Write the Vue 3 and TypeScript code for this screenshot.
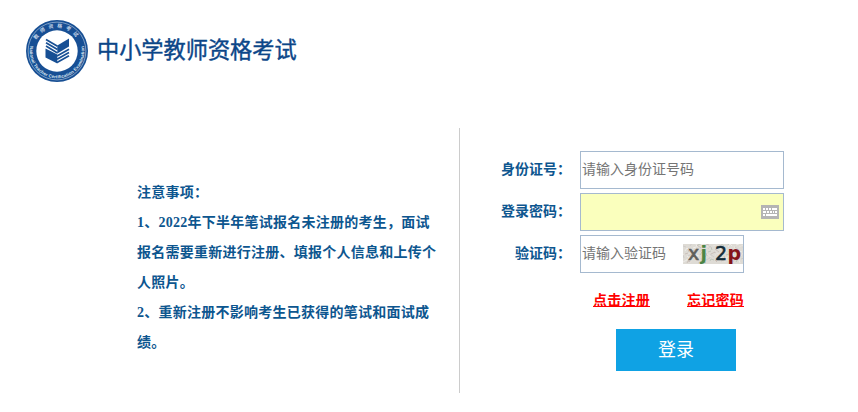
<template>
    <div class="page">
        <header class="header">
            <svg class="logo" viewBox="0 0 64 64">
                <defs>
                    <path id="arc-top" d="M8.6 32 A23.4 23.4 0 0 1 55.4 32" />
                    <path id="arc-bottom" d="M5 28 A27.3 27.3 0 1 0 59 28" />
                </defs>
                <circle cx="32" cy="32" r="31" fill="#174f94" />
                <circle cx="32" cy="32" r="28.9" fill="none" stroke="#a9c0da" stroke-width="0.7" />
                <circle cx="32" cy="32" r="20.7" fill="#fff" />
                <text class="logo-cn">
                    <textPath href="#arc-top" startOffset="50%" text-anchor="middle">教师资格考试</textPath>
                </text>
                <text class="logo-en">
                    <textPath href="#arc-bottom" startOffset="50%" text-anchor="middle">National Teacher Certification Examination</textPath>
                </text>
                <g fill="#174f94">
                    <path d="M32.3 26.5 L44 19.5 V27.5 L32.3 34.5 Z" />
                    <path d="M20.5 29.5 L32.3 35.5 V44.5 L20.5 38.5 Z" />
                </g>
                <g stroke="#174f94" stroke-width="1.7" fill="none">
                    <path d="M21 20.5 L32.5 27.3" />
                    <path d="M21 23.8 L32.5 30.6" />
                    <path d="M21 27.1 L32.5 33.9" />
                    <path d="M32 36.9 L44 30.2" />
                    <path d="M32 40.2 L44 33.5" />
                    <path d="M32 43.5 L44 36.8" />
                </g>
            </svg>
            <h1 class="title">中小学教师资格考试</h1>
        </header>

        <main class="main">
            <section class="notice">
                <p>注意事项：</p>
                <p v-for="(lines, i) of notices" :key="i">
                    <span v-for="line of lines" :key="line" class="line">{{ line }}</span>
                </p>
            </section>

            <form class="login" @submit.prevent>
                <div class="row">
                    <label for="idcard">身份证号：</label>
                    <input id="idcard" v-model.trim="idCard" type="text" class="field" placeholder="请输入身份证号码">
                </div>
                <div class="row">
                    <label for="password">登录密码：</label>
                    <div class="field password">
                        <input id="password" v-model="password" type="password">
                        <svg class="keyboard" width="18" height="14" viewBox="0 0 18 14" shape-rendering="crispEdges">
                            <rect width="18" height="14" fill="#b4b4b4" />
                            <path fill="#fff" d="M2 3h2v2H2zM5 3h2v2H5zM8 3h2v2H8zM11 3h5v2h-5zM2 6h3v2H2zM6 6h2v2H6zM9 6h2v2H9zM12 6h1v2h-1zM14 6h2v2h-2zM2 9h2v2H2zM5 9h11v2H5z" />
                        </svg>
                    </div>
                </div>
                <div class="row">
                    <label for="code">验证码：</label>
                    <div class="field code">
                        <input id="code" v-model.trim="code" type="text" placeholder="请输入验证码">
                        <svg class="captcha" width="60" height="20" viewBox="0 0 60 20">
                            <defs>
                                <clipPath id="captcha-box">
                                    <rect width="60" height="20" />
                                </clipPath>
                            </defs>
                            <g clip-path="url(#captcha-box)">
                                <rect width="60" height="20" fill="#dedbd5" />
                                <path v-for="(n, i) of noise" :key="i" :d="n.d" :stroke="n.color" stroke-width="0.8" fill="none" />
                            </g>
                            <text x="5" y="16" fill="#5f5e5a" stroke="#5f5e5a" class="thin">x</text>
                            <text x="17.5" y="16" fill="#4c8545">j</text>
                            <text x="32" y="16" fill="#142c39" stroke="#142c39" class="thin">2</text>
                            <text x="44.5" y="16" fill="#85141a">p</text>
                        </svg>
                    </div>
                </div>
                <div class="links">
                    <a href="#">点击注册</a>
                    <a href="#">忘记密码</a>
                </div>
                <button type="submit" class="submit">登录</button>
            </form>
        </main>
    </div>
</template>

<script lang="ts" setup>
import { ref } from 'vue'

const idCard = ref('');
const password = ref('');
const code = ref('');

const notices: string[][] = [
    ['1、2022年下半年笔试报名未注册的考生，面试', '报名需要重新进行注册、填报个人信息和上传个', '人照片。'],
    ['2、重新注册不影响考生已获得的笔试和面试成', '绩。']
];

// short strokes behind the captcha letters
const colors = ['#c5b9b3', '#f1f0ee', '#b9c2b4', '#cbc8c6', '#ebe4df'];
const noise = Array.from({ length: 110 }, (_, i) => {
    const x = (i * 37) % 61;
    const y = (i * 23 + (i % 7) * 3) % 20;
    const dx = (i * 5) % 9 - 4;
    const dy = (i * 7) % 7 - 3 + (i % 3);
    return { d: `M${x} ${y}l${dx} ${dy}`, color: colors[i % colors.length] };
});
</script>

<style>
body {
    background: #fff;
}
</style>

<style scoped>
.page {
    width: 858px;
    height: 412px;
    overflow: hidden;
    font-family: "Liberation Serif", "Noto Sans CJK SC", sans-serif;
    font-size: 14px;
    color: #0d568f;
}

.header {
    display: flex;
    align-items: center;
    height: 128px;
    padding: 0 0 26px 25px;
    box-sizing: border-box;
}

.logo {
    width: 64px;
    height: 64px;
}

.logo-cn {
    font: bold 5px "Noto Sans CJK SC", sans-serif;
    letter-spacing: 3.4px;
    fill: #c3d3e6;
}

.logo-en {
    font: bold 4.5px "Liberation Sans", sans-serif;
    letter-spacing: 0.1px;
    fill: #dce6f1;
}

.title {
    margin: 0 0 7px 8px;
    font: 400 22.2px/32px "Noto Sans CJK SC", sans-serif;
    color: #0c4688;
    -webkit-text-stroke: 0.4px #0c4688;
}

.main {
    display: flex;
    height: 265px;
}

.notice {
    width: 460px;
    padding: 50px 0 0 137px;
    box-sizing: border-box;
    border-right: 1px solid #ccc;
    font-weight: bold;
    line-height: 30px;
    letter-spacing: 0.25px;
    white-space: nowrap;
}

.notice p {
    margin: 0;
}

.line {
    display: block;
    height: 30px;
}

.login {
    width: 324px;
    padding-top: 23px;
}

.row {
    display: flex;
    align-items: center;
    margin-bottom: 4px;
}

.row label {
    width: 111px;
    margin-right: 9px;
    padding-bottom: 5px;
    font-weight: bold;
    text-align: right;
}

.field {
    width: 204px;
    height: 38px;
    padding: 0 1px;
    box-sizing: border-box;
    border: 1px solid #a5b9cf;
    background: #fff;
}

input {
    min-width: 0;
    font: 14px "Liberation Serif", "Noto Sans CJK SC", sans-serif;
    outline: none;
}

input::placeholder {
    color: #757575;
}

.password,
.code {
    display: flex;
    align-items: center;
}

.password input,
.code input {
    flex: 1;
    padding: 0;
    border: 0;
    background: transparent;
}

.password {
    padding-right: 4px;
    background: #faffbd;
}

.code {
    width: 164px;
    padding-right: 0;
}

.keyboard,
.captcha {
    flex: none;
}

.captcha {
    overflow: visible;
}

.captcha text {
    font-family: "DejaVu Sans", sans-serif;
    font-size: 19px;
    font-weight: bold;
}

.captcha .thin {
    font-weight: normal;
    stroke-width: 0.6px;
}

.links {
    display: flex;
    gap: 37px;
    padding: 14px 0 0 133px;
    line-height: 20px;
}

.links a {
    font-weight: bold;
    letter-spacing: 0.25px;
    color: #f00;
}

.submit {
    display: block;
    width: 120px;
    height: 42px;
    margin: 18px 0 0 156px;
    padding: 0 0 4px;
    border: 0;
    background: #0fa2e4;
    color: #fff;
    font: 18px "Noto Sans CJK SC", sans-serif;
}
</style>
